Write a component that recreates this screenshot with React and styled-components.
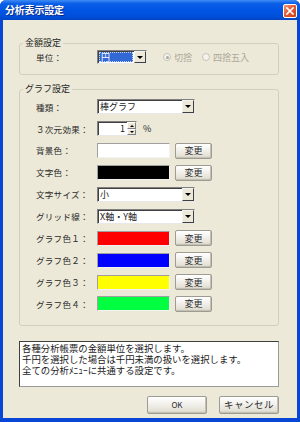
import React from 'react';
import styled, { createGlobalStyle } from 'styled-components';

const GlobalStyle = createGlobalStyle`
  html, body {
    margin: 0;
    padding: 0;
    background: #ffffff;
  }
  body {
    font-family: "Noto Sans CJK JP", "Liberation Sans", sans-serif;
  }
`;

const font = `"Noto Sans CJK JP", "Liberation Sans", sans-serif`;

const Window = styled.div`
  width: 300px;
  height: 422px;
  box-sizing: border-box;
  display: flex;
  flex-direction: column;
  background: #0847d6;
  border-radius: 6px 6px 0 0;
  overflow: hidden;
`;

const TitleBar = styled.div`
  height: 20px;
  flex: none;
  display: flex;
  align-items: center;
  justify-content: space-between;
  padding: 0 3px 0 5px;
  background: linear-gradient(to bottom, #3d8cf6 0%, #0b5fe6 18%, #0055e5 50%, #004ed8 85%, #0043c0 100%);
`;

const Title = styled.span`
  color: #ffffff;
  font-family: ${font};
  font-size: 10px;
  font-weight: bold;
  letter-spacing: -0.2px;
  text-shadow: 1px 1px 0 #0a2b8a;
  line-height: 1;
`;

const CloseButton = styled.div`
  width: 14px;
  height: 14px;
  box-sizing: border-box;
  border: 1px solid #ffffff;
  border-radius: 2px;
  background: linear-gradient(135deg, #f09a7c 0%, #e35d34 45%, #c73f18 100%);
  display: flex;
  align-items: center;
  justify-content: center;
  margin-top: 1px;
`;

const Client = styled.div`
  flex: 1;
  margin: 0 3px 4px 3px;
  background: #ece9d8;
  padding: 17px 18px 0 16px;
  display: flex;
  flex-direction: column;
`;

const Group = styled.fieldset`
  margin: 0 0 ${p => p.$mb || 0}px 0;
  padding: ${p => p.$pad};
  border: 1px solid #d0d0bf;
  border-radius: 3px;
  min-width: 0;
`;

const Legend = styled.legend`
  margin-left: -13px;
  padding: 0 2px;
  height: 12px;
  font-family: ${font};
  font-size: 9px;
  line-height: 12px;
  color: #1f1f1f;
`;

const UnitRow = styled.div`
  display: flex;
  align-items: center;
  height: 14px;
`;

const FormGrid = styled.div`
  display: grid;
  grid-template-columns: 61px 1fr;
  grid-auto-rows: 21.9px;
  align-items: center;
`;

const Label = styled.span`
  font-family: ${font};
  font-size: 8.5px;
  line-height: 1;
  color: #2a2a2a;
  letter-spacing: 0.3px;
  white-space: nowrap;
  width: ${p => (p.$w ? `${p.$w}px` : 'auto')};
`;

const Controls = styled.div`
  display: flex;
  align-items: center;
  gap: ${p => p.$gap || 0}px;
`;

const Select = styled.div`
  width: ${p => p.$w}px;
  height: ${p => p.$h || 15}px;
  box-sizing: border-box;
  display: flex;
  align-items: stretch;
  background: #ffffff;
  border-top: 1px solid #808080;
  border-left: 1px solid #808080;
  border-right: 1px solid #e8e8e8;
  border-bottom: 1px solid #e8e8e8;
  box-shadow: inset 1px 1px 0 #404040;
`;

const SelectText = styled.div`
  flex: 1;
  display: flex;
  align-items: center;
  padding-left: 2px;
  margin: ${p => (p.$selected ? '1px' : '0')};
  font-family: ${font};
  font-size: 9px;
  line-height: 1;
  color: ${p => (p.$selected ? '#ffffff' : '#1a1a1a')};
  background: ${p => (p.$selected ? '#3168d5' : 'transparent')};
  outline: ${p => (p.$selected ? '1px dotted #c8d6f5' : 'none')};
  outline-offset: -1px;
  white-space: nowrap;
`;

const DropButton = styled.div`
  width: 12px;
  flex: none;
  box-sizing: border-box;
  background: #ece9d8;
  border-top: 1px solid #f4f3ee;
  border-left: 1px solid #f4f3ee;
  border-right: 1px solid #404040;
  border-bottom: 1px solid #404040;
  display: flex;
  align-items: center;
  justify-content: center;
`;

const Arrow = styled.span`
  width: 0;
  height: 0;
  border-left: 3px solid transparent;
  border-right: 3px solid transparent;
  border-top: 3px solid #000000;
`;

const Radio = styled.div`
  display: flex;
  align-items: center;
  gap: 3px;
  margin-left: ${p => p.$ml}px;
  font-family: ${font};
  font-size: 9px;
  color: #aca899;
  white-space: nowrap;
`;

const RadioDot = styled.span`
  width: 8px;
  height: 8px;
  box-sizing: border-box;
  border-radius: 50%;
  border: 1px solid #c6c3b4;
  background: #f4f3ee;
  display: flex;
  align-items: center;
  justify-content: center;
  &::after {
    content: '';
    width: 3px;
    height: 3px;
    border-radius: 50%;
    background: ${p => (p.$checked ? '#aca899' : 'transparent')};
  }
`;

const Spin = styled.div`
  width: 40px;
  height: 15px;
  box-sizing: border-box;
  display: flex;
  background: #ffffff;
  border-top: 1px solid #808080;
  border-left: 1px solid #808080;
  border-right: 1px solid #e8e8e8;
  border-bottom: 1px solid #e8e8e8;
  box-shadow: inset 1px 1px 0 #404040;
`;

const SpinValue = styled.div`
  flex: 1;
  text-align: right;
  padding-right: 2px;
  font-family: ${font};
  font-size: 9px;
  line-height: 13px;
  color: #1a1a1a;
`;

const SpinButtons = styled.div`
  width: 9px;
  display: flex;
  flex-direction: column;
`;

const SpinButton = styled.div`
  flex: 1;
  box-sizing: border-box;
  background: #ece9d8;
  border-top: 1px solid #ffffff;
  border-left: 1px solid #ffffff;
  border-right: 1px solid #808080;
  border-bottom: 1px solid #808080;
  display: flex;
  align-items: center;
  justify-content: center;
  &::after {
    content: '';
    border-left: 2px solid transparent;
    border-right: 2px solid transparent;
    ${p => (p.$up ? 'border-bottom: 2px solid #000;' : 'border-top: 2px solid #000;')}
  }
`;

const Percent = styled.span`
  font-family: ${font};
  font-size: 9px;
  color: #2a2a2a;
  margin-left: 6px;
`;

const Swatch = styled.div`
  width: 73px;
  height: 15px;
  box-sizing: border-box;
  background: ${p => p.$color};
  border-top: 1px solid #a0a0a0;
  border-left: 1px solid #a0a0a0;
  border-right: 1px solid #f2f2f2;
  border-bottom: 1px solid #f2f2f2;
`;

const Button = styled.div`
  width: ${p => p.$w}px;
  height: ${p => p.$h}px;
  box-sizing: border-box;
  display: flex;
  align-items: center;
  justify-content: center;
  border: 1px solid #9d9b92;
  border-radius: 2px;
  background: linear-gradient(to bottom, #ffffff 0%, #f3f2ee 40%, #e4e1d6 85%, #cfccc0 100%);
  box-shadow: inset -1px -1px 0 #c4c1b4;
  font-family: ${font};
  font-size: ${p => p.$fs || 9}px;
  letter-spacing: ${p => p.$ls || 0}px;
  color: #2a2a2a;
  line-height: 1;
`;

const Message = styled.div`
  height: 46px;
  box-sizing: border-box;
  margin-top: 15px;
  padding: 1px 2px;
  background: #ffffff;
  border-top: 1px solid #404040;
  border-left: 1px solid #404040;
  border-right: 1px solid #9a9a9a;
  border-bottom: 1px solid #9a9a9a;
  font-family: ${font};
  font-size: 9.4px;
  line-height: 11px;
  color: #1a1a1a;
  white-space: pre;
`;

const Footer = styled.div`
  display: flex;
  justify-content: flex-end;
  gap: 12px;
  margin-top: 9px;
`;

const colorRows = [
  { label: 'グラフ色１：', color: '#ff0000' },
  { label: 'グラフ色２：', color: '#0000ff' },
  { label: 'グラフ色３：', color: '#ffff00' },
  { label: 'グラフ色４：', color: '#00ff40' },
];

const Dropdown = ({ w, h, value, selected }) => (
  <Select $w={w} $h={h}>
    <SelectText $selected={selected}>{value}</SelectText>
    <DropButton>
      <Arrow />
    </DropButton>
  </Select>
);

const ColorPicker = ({ color }) => (
  <Controls $gap={5}>
    <Swatch $color={color} />
    <Button $w={37} $h={16}>変更</Button>
  </Controls>
);

export default function App() {
  return (
    <>
      <GlobalStyle />
      <Window>
        <TitleBar>
          <Title>分析表示設定</Title>
          <CloseButton>
            <svg width="8" height="8" viewBox="0 0 8 8">
              <path d="M1 1 L7 7 M7 1 L1 7" stroke="#ffffff" strokeWidth="1.6" strokeLinecap="square" />
            </svg>
          </CloseButton>
        </TitleBar>
        <Client>
          <Group $pad="1px 10px 10px 16px" $mb={8}>
            <Legend>金額設定</Legend>
            <UnitRow>
              <Label $w={61}>単位：</Label>
              <Dropdown w={50} h={14} value="円" selected />
              <Radio $ml={16}>
                <RadioDot $checked />
                切捨
              </Radio>
              <Radio $ml={10}>
                <RadioDot />
                四捨五入
              </Radio>
            </UnitRow>
          </Group>
          <Group $pad="1px 10px 10px 16px">
            <Legend>グラフ設定</Legend>
            <FormGrid>
              <Label>種類：</Label>
              <Dropdown w={98} value="棒グラフ" />

              <Label>３次元効果：</Label>
              <Controls>
                <Spin>
                  <SpinValue>1</SpinValue>
                  <SpinButtons>
                    <SpinButton $up />
                    <SpinButton />
                  </SpinButtons>
                </Spin>
                <Percent>%</Percent>
              </Controls>

              <Label>背景色：</Label>
              <ColorPicker color="#ffffff" />

              <Label>文字色：</Label>
              <ColorPicker color="#000000" />

              <Label>文字サイズ：</Label>
              <Dropdown w={98} value="小" />

              <Label>グリッド線：</Label>
              <Dropdown w={98} value="X軸・Y軸" />

              {colorRows.map(row => (
                <React.Fragment key={row.label}>
                  <Label>{row.label}</Label>
                  <ColorPicker color={row.color} />
                </React.Fragment>
              ))}
            </FormGrid>
          </Group>
          <Message>
            {'各種分析帳票の金額単位を選択します。\n千円を選択した場合は千円未満の扱いを選択します。\n全ての分析ﾒﾆｭｰに共通する設定です。'}
          </Message>
          <Footer>
            <Button $w={60} $h={18} $fs={8}>OK</Button>
            <Button $w={60} $h={18} $fs={9.5} $ls={0.5}>キャンセル</Button>
          </Footer>
        </Client>
      </Window>
    </>
  );
}
